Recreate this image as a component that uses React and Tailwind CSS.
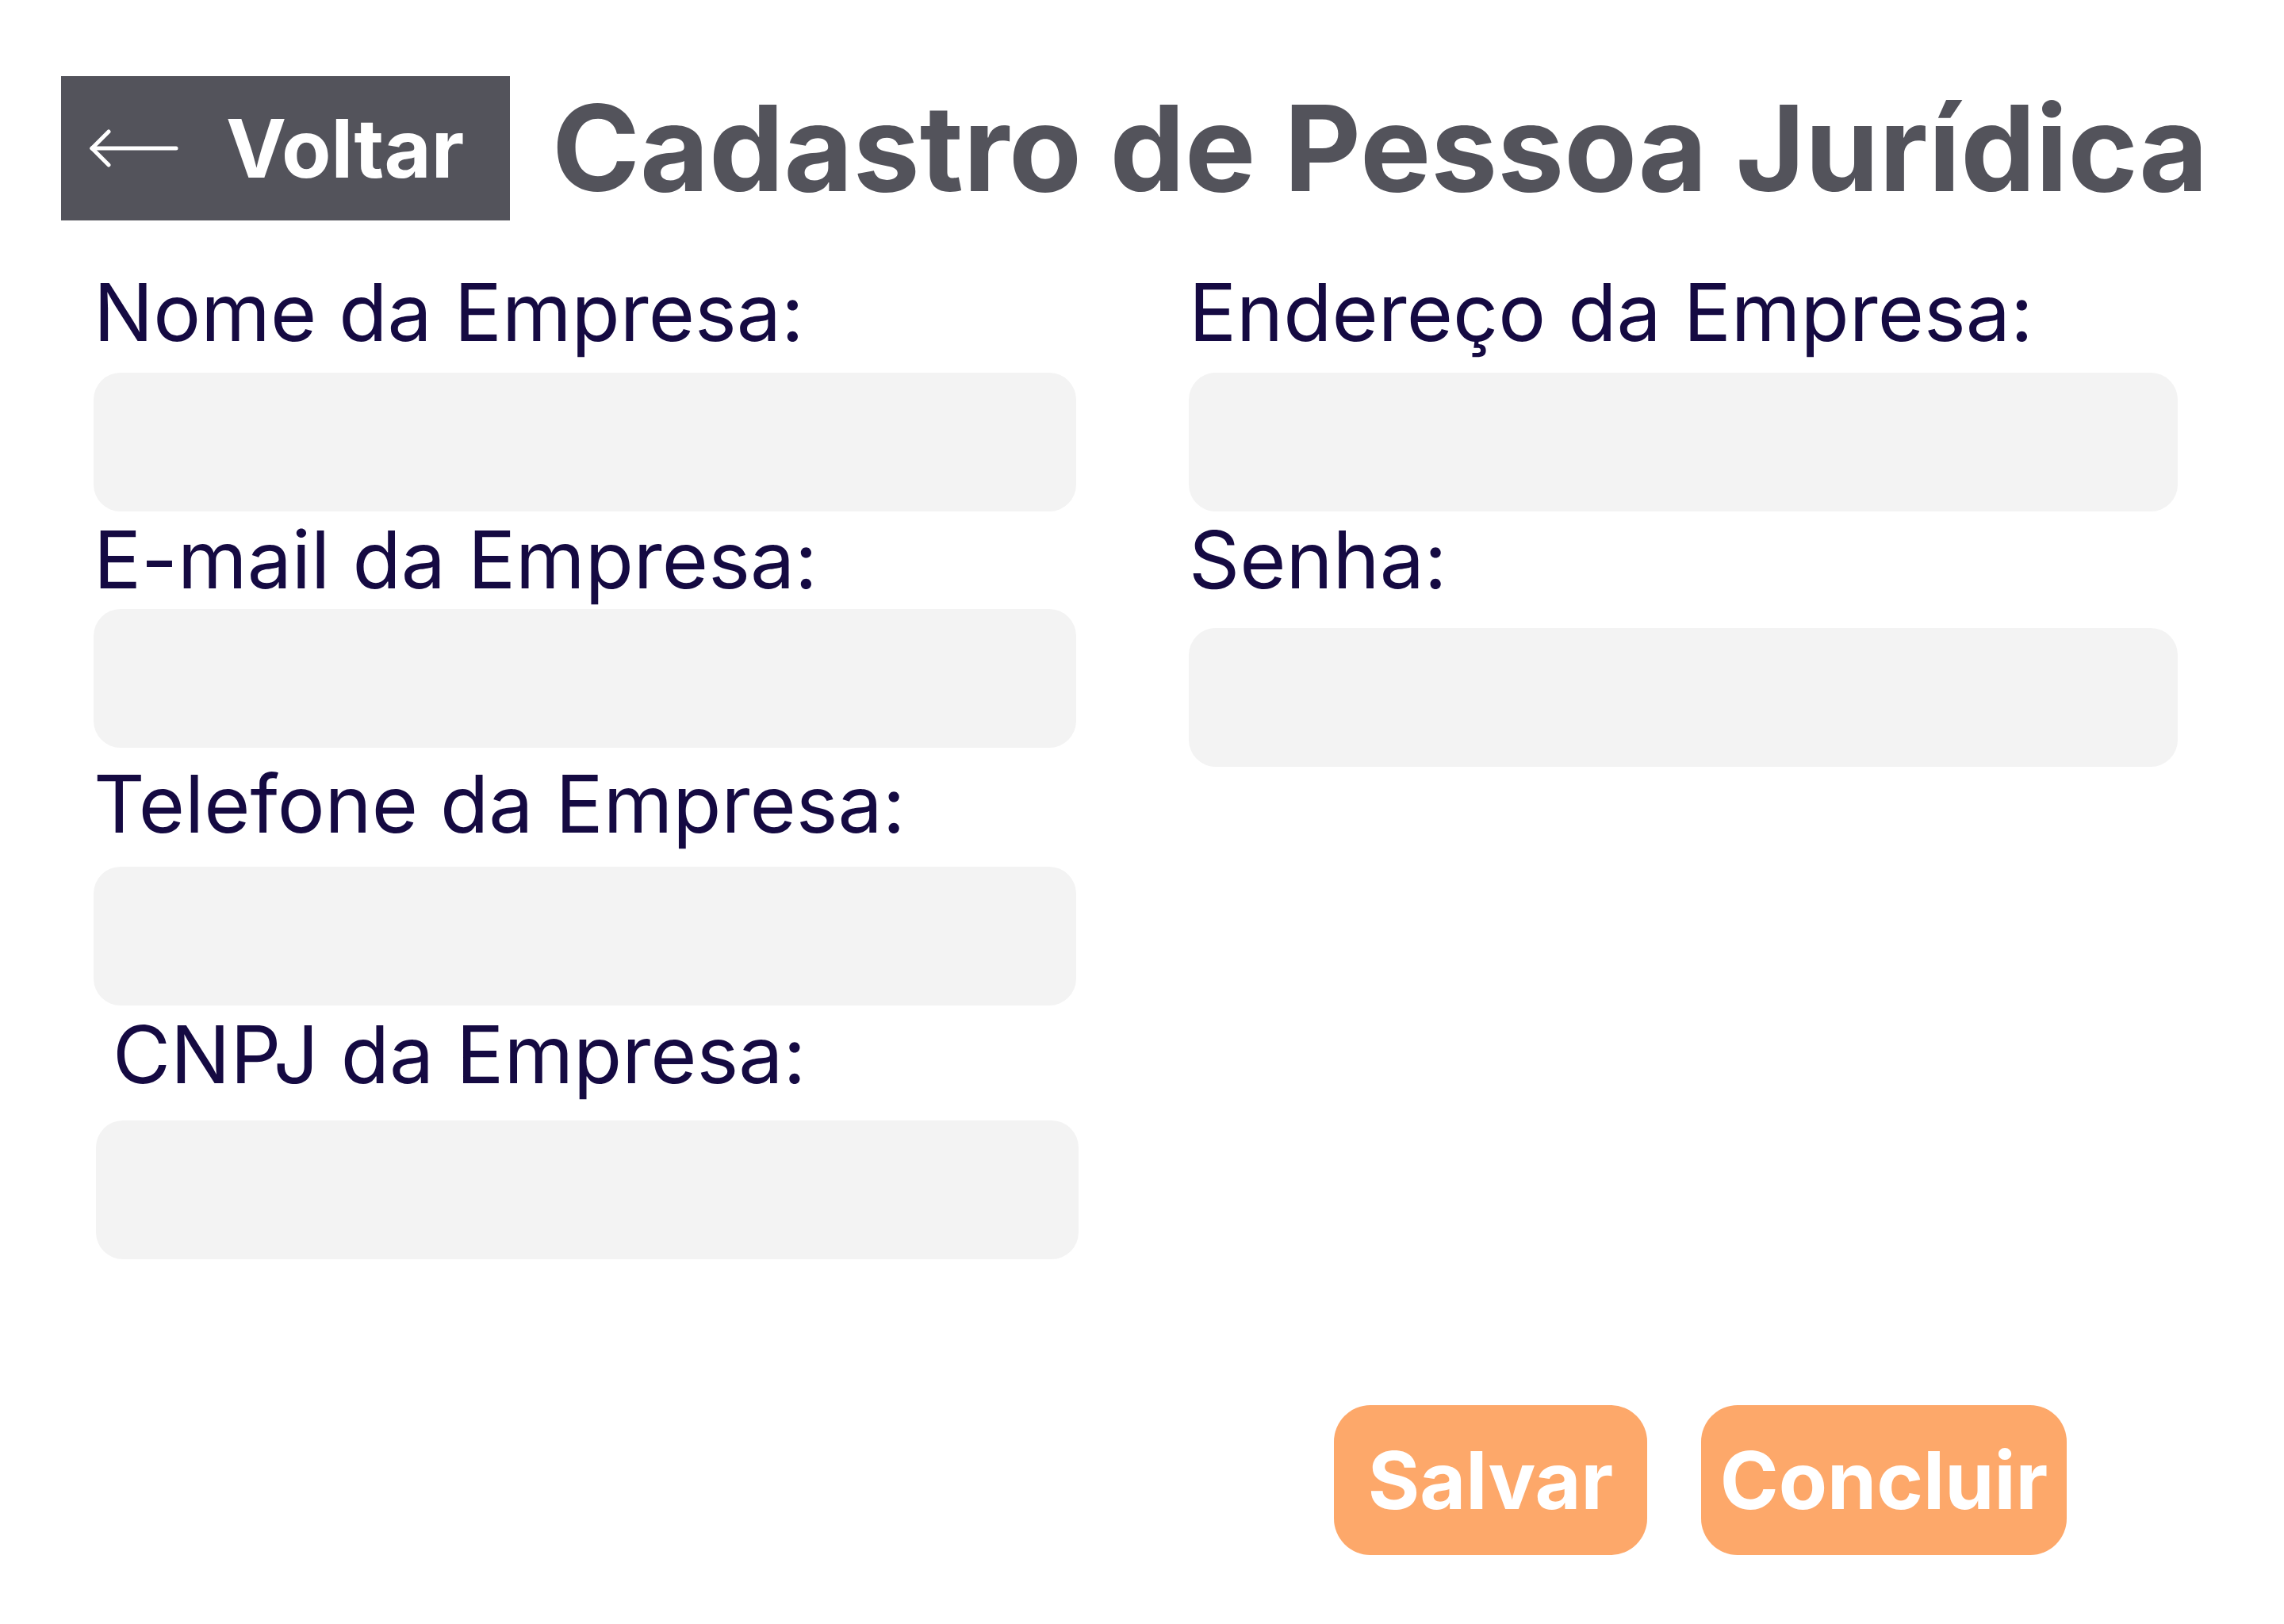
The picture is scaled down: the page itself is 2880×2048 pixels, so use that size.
import React from 'react';

function Field({ label, labelClass = '', inputClass = '', boxClass = '' }) {
  return (
    <div className={boxClass}>
      <label className={`block text-[100px] leading-none text-[#150a42] ${labelClass}`}>{label}</label>
      <input
        type="text"
        className={`block w-full h-[175px] rounded-[34px] bg-[#f3f3f3] outline-none ${inputClass}`}
      />
    </div>
  );
}

export default function App() {
  return (
    <div className="min-h-screen bg-white font-['Inter','Liberation_Sans',sans-serif] pl-[77px] pt-[96px]">
      <div className="flex items-center gap-[53px]">
        <button className="flex items-center w-[566px] h-[182px] bg-[#53535b] text-white pl-[36px]">
          <svg width="112" height="50" viewBox="0 0 112 50" fill="none" stroke="white" strokeWidth="5" strokeLinecap="round" strokeLinejoin="round">
            <path d="M3 25 H109" />
            <path d="M3 25 L24 4" />
            <path d="M3 25 L24 46" />
          </svg>
          <span className="ml-[60px] text-[102px] font-bold leading-none">Voltar</span>
        </button>
        <h1 className="text-[150px] font-bold leading-none text-[#53535b]">Cadastro de Pessoa Jurídica</h1>
      </div>

      <div className="grid grid-cols-[1239px_1247px] gap-x-[142px] ml-[41px] mt-[66px]">
        <div className="flex flex-col">
          <Field label="Nome da Empresa:" inputClass="mt-[26px]" />
          <Field label="E-mail da Empresa:" boxClass="mt-[11px]" inputClass="mt-[12px]" />
          <Field label="Telefone da Empresa:" boxClass="mt-[21px]" inputClass="mt-[29px]" />
          <Field label="CNPJ da Empresa:" boxClass="mt-[12px]" labelClass="pl-[24px]" inputClass="mt-[33px] ml-[3px] w-[1236px]" />
        </div>
        <div className="flex flex-col">
          <Field label="Endereço da Empresa:" inputClass="mt-[26px]" />
          <Field label="Senha:" boxClass="mt-[11px]" inputClass="mt-[36px]" />
        </div>
      </div>

      <div className="flex gap-[68px] mt-[184px] ml-[1605px]">
        <button className="w-[395px] h-[189px] rounded-[46px] bg-[#fda86a] text-white text-[100px] font-bold leading-none">
          Salvar
        </button>
        <button className="w-[461px] h-[189px] rounded-[46px] bg-[#fda86a] text-white text-[100px] font-bold leading-none">
          Concluir
        </button>
      </div>
    </div>
  );
}
